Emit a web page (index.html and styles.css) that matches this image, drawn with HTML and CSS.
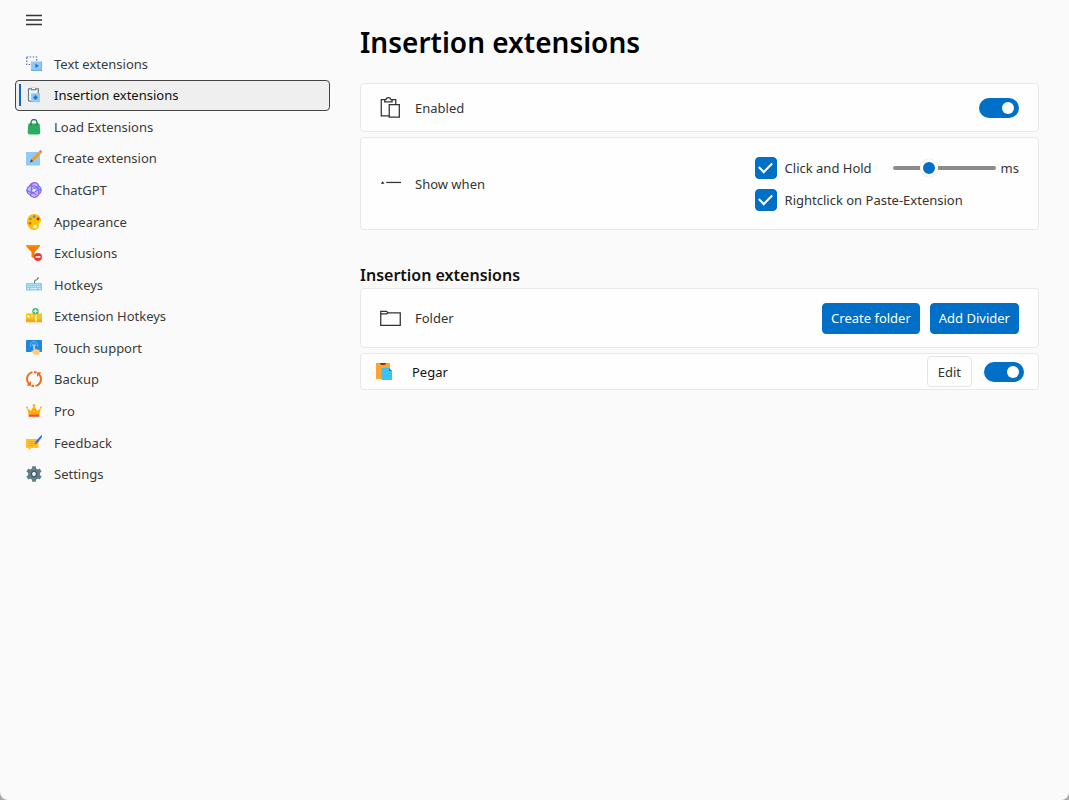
FILE: index.html
```html
<!DOCTYPE html>
<html lang="en">
<head>
<meta charset="utf-8">
<meta name="viewport" content="width=device-width, initial-scale=1">
<title>Insertion extensions</title>
<link rel="stylesheet" href="styles.css">
</head>
<body>
<div class="window">
  <aside class="sidebar">
    <button class="menu-button" type="button" aria-label="Toggle navigation">
      <svg class="menu-icon" viewBox="0 0 16 12" aria-hidden="true"><path d="M0 1.500h16M0 6h16M0 10.500h16" stroke="#333" stroke-width="1.300"/></svg>
    </button>
    <nav class="nav">
      <a class="nav-item" href="#text">
        <svg class="nav-icon" viewBox="0 0 16 16" aria-hidden="true"><path d="M.7 1h10v7.500h-10z" fill="none" stroke="#4a5fc4" stroke-width="1.200" stroke-dasharray="1.500 1.500"/><path d="M5 5.500h11v8.500H5z" fill="#8fc9fa"/><path d="M5 14.400h11V5" fill="none" stroke="#4b9bd8" stroke-width=".9"/><path d="M9.200 7.500l3.600 2.400-3.200 2z" fill="#1c6fd0"/></svg>
        <span>Text extensions</span></a>
      <a class="nav-item nav-item-current" href="#insertion" aria-current="page">
        <svg class="nav-icon" viewBox="0 0 16 16" aria-hidden="true"><path d="M2.500 1.800h9.800v12.400H3.500q-1 0-1-1z" fill="#f2f8fd" stroke="#607d8b" stroke-width="1.200"/><path d="M5 .8h5v2.600H5z" fill="#78909c"/><path d="M6 1.500h3" stroke="#fff"/><path d="M5 6.200h9v9H5z" fill="#90caf9"/><path d="M9.500 8.300v4.500M7.300 10.500h4.500" stroke="#1976d2" stroke-width="1.500"/><path d="M8 9l3 3M11 9l-3 3" stroke="#1976d2" stroke-width=".6"/></svg>
        <span>Insertion extensions</span></a>
      <a class="nav-item" href="#load">
        <svg class="nav-icon" viewBox="0 0 16 16" aria-hidden="true"><path d="M5 6V3.500a3 3 0 0 1 6 0V6" fill="none" stroke="#178544" stroke-width="1.300"/><path d="M3.200 4.500h9.600q.8 0 .9 1l.6 7.500q.1 2.500-2 2.500H3.700q-2.100 0-2-2.500l.6-7.500q.1-1 .9-1z" fill="#2cab62"/><path d="M5 4v2.500M11 4v2.500" stroke="#178544" stroke-width="1.200"/></svg>
        <span>Load Extensions</span></a>
      <a class="nav-item" href="#create">
        <svg class="nav-icon" viewBox="0 0 16 16" aria-hidden="true"><path d="M0 2h14v13.500H0z" fill="#90caf9"/><path d="M4.200 12.300l1-3.200L13 1.200l2.200 2.200-7.900 7.900z" fill="#f59a1b"/><path d="M13 1.200L14.300 0q1.700.3 1.700 2l-.8 1.400z" fill="#e57373"/><path d="M4 12.500l1.200-3.300 2 2z" fill="#37474f"/><path d="M12.300 2l2.100 2.100" stroke="#b0bec5"/></svg>
        <span>Create extension</span></a>
      <a class="nav-item" href="#chatgpt">
        <svg class="nav-icon" viewBox="0 0 16 16" aria-hidden="true"><defs><linearGradient id="knot" gradientUnits="userSpaceOnUse" x1="4" y1="0" x2="10" y2="16"><stop stop-color="#c44bed"/><stop offset=".45" stop-color="#5b78ee"/><stop offset="1" stop-color="#b052f7"/></linearGradient></defs><circle cx="8" cy="8" r="7" fill="#cdbcfb"/><path d="M8 5.300L5.300 3.800Q6 .7 8.800.7q2.900.2 4 3.300 2.600 1.500 2.400 4.500-.3 2.600-2.500 3.700-1.400 2.900-4.500 3.100-2.900 0-4.200-2.700Q.9 11.200.8 8.200 1 5.500 3.400 4.200 4.600 1.700 7 .9M5.300 3.800v6.100l5.200 3M12.800 4L8 6.700v5.600M15 8.500L10 5.600 5 8.400M12.700 12.200V6.300L7.500 3.300M4 12.600L8.300 10l4.800-2.800M.9 8.200l4.900 2.900 5-2.900" fill="none" stroke="url(#knot)" stroke-width="1.200"/><circle cx="8" cy="8.300" r="1.400" fill="#fff"/></svg>
        <span>ChatGPT</span></a>
      <a class="nav-item" href="#appearance">
        <svg class="nav-icon" viewBox="0 0 16 16" aria-hidden="true"><path d="M8 0C12 0 15 2.600 15 6.200c0 2.300-1.100 3.200-2.200 3.400.8 3.600-.8 6.400-4.300 6.400C4 16 1 12.500 1 8s3-8 7-8z" fill="#ffc107"/><circle cx="9" cy="12.500" r="1.800" fill="#fff"/><circle cx="4" cy="9.300" r="1.400" fill="#f4511e"/><circle cx="4.500" cy="5" r="1.400" fill="#7cb342"/><circle cx="8.200" cy="2.700" r="1.400" fill="#29a5e8"/><circle cx="12" cy="5" r="1.400" fill="#c2185b"/></svg>
        <span>Appearance</span></a>
      <a class="nav-item" href="#exclusions">
        <svg class="nav-icon" viewBox="0 0 16 16" aria-hidden="true"><path d="M.3 0h13.500v1.500L8.700 7v6.500L5.500 12V7L.3 1.500z" fill="#f57c00"/><path d="M.3 0h13.500v1.500H.3z" fill="#ff9800"/><circle cx="12" cy="12" r="4" fill="#e53935"/><path d="M9.500 12h5" stroke="#fff" stroke-width="1.500"/></svg>
        <span>Exclusions</span></a>
      <a class="nav-item" href="#hotkeys">
        <svg class="nav-icon" viewBox="0 0 16 16" aria-hidden="true"><path d="M8.500 6V4q0-1 1.500-1t1.500-.8V1h1.500" fill="none" stroke="#546e7a"/><path d="M0 6h16v7.500H0z" fill="#8cc8e8"/><path d="M1.200 7.700h13.600M1.200 9.700h13.600" stroke="#e4f4fc" stroke-dasharray="1.200 .8"/><path d="M1.200 11.700h2M4.500 11.700h7M12.700 11.700h2" stroke="#e4f4fc"/></svg>
        <span>Hotkeys</span></a>
      <a class="nav-item" href="#extension-hotkeys">
        <svg class="nav-icon" viewBox="0 0 16 16" aria-hidden="true"><path d="M0 5.500h16v8.700H0z" fill="#f7c21d"/><path d="M0 11.500h16v2.700H0z" fill="#f3a817"/><path d="M10 5.500v8.700" stroke="#fff4d0" stroke-width="1.300"/><path d="M2 7v2M2 9h2M5 8h2" stroke="#fff"/><circle cx="9.500" cy="3.200" r="3.200" fill="#45b568"/><path d="M9.500 1.200v4M7.500 3.200h4" stroke="#fff" stroke-width="1.200"/></svg>
        <span>Extension Hotkeys</span></a>
      <a class="nav-item" href="#touch">
        <svg class="nav-icon" viewBox="0 0 16 16" aria-hidden="true"><rect width="16" height="12" rx=".8" fill="#1e88e5"/><path d="M4.500 6.500a3.700 3.700 0 1 1 7 0M6 6a2 2 0 1 1 4 0" fill="none" stroke="#7ac2fa" stroke-width=".9"/><path d="M7.300 5q1-.8 1.600.2V9l4 .8q1 .5.800 1.700l-.7 3.300H8L5.200 11q.5-1 2.100 0z" fill="#ffcc80"/></svg>
        <span>Touch support</span></a>
      <a class="nav-item" href="#backup">
        <svg class="nav-icon" viewBox="0 0 16 16" aria-hidden="true"><g fill="none" stroke="#f26a1b" stroke-width="1.900"><path d="M6.500 1.100A7 7 0 0 0 3.200 13"/><path d="M9.500 14.900A7 7 0 0 0 12.800 3"/><path d="M8 1a7 7 0 0 1 2.500.5M8 15a7 7 0 0 1-2.500-.5"/></g><path d="M5 10v4.700H.5zM11 6V1.300h4.500z" fill="#f26a1b"/></svg>
        <span>Backup</span></a>
      <a class="nav-item" href="#pro">
        <svg class="nav-icon" viewBox="0 0 16 16" aria-hidden="true"><path d="M1 5l3.800 2.700L8 2.500l3.200 5.200L15 5l-1.800 7H2.800z" fill="#ffb300"/><circle cx="1" cy="4.500" r="1" fill="#ffb300"/><circle cx="15" cy="4.500" r="1" fill="#ffb300"/><circle cx="8" cy="2.200" r="1.300" fill="#ffb300"/><path d="M2.600 11.500h10.800v2.300H2.600z" fill="#f4512c"/><ellipse cx="8" cy="8.500" rx="1.100" ry="1.700" fill="#ffe9a8" stroke="#ef6c00" stroke-width=".7"/></svg>
        <span>Pro</span></a>
      <a class="nav-item" href="#feedback">
        <svg class="nav-icon" viewBox="0 0 16 16" aria-hidden="true"><path d="M0 4h12.500v9H5l-2.500 2.500V13H0z" fill="#ffc12e"/><path d="M2 6.500h7M2 8.500h5.500M2 10.500h5" stroke="#e9a02a" stroke-width=".8"/><path d="M7.800 8.300l2-1.500 1.300 1.300-1.500 2z" fill="#ec6b36"/><path d="M9.800 6.800L15.300.5l.7.900-4.900 6.700z" fill="#3671cf" stroke="#3671cf" stroke-width=".8"/></svg>
        <span>Feedback</span></a>
      <a class="nav-item" href="#settings">
        <svg class="nav-icon" viewBox="0 0 16 16" aria-hidden="true"><path d="M8 .2v15.600M1.300 4.100l13.400 7.800M1.300 11.900l13.400-7.800" stroke="#607d8b" stroke-width="3.800"/><circle cx="8" cy="8" r="6" fill="#607d8b"/><circle cx="8" cy="8" r="3.200" fill="#455a64"/><circle cx="8" cy="8" r="1.900" fill="#fafafa"/></svg>
        <span>Settings</span></a>
    </nav>
  </aside>

  <main class="content">
    <h1 class="page-title">Insertion extensions</h1>

    <section class="card card-enabled">
      <svg class="card-icon" viewBox="0 0 20 20" aria-hidden="true"><g fill="none" stroke="#333" stroke-width="1.200"><path d="M8.800 18H1.200V2.600H5.500Q6 .7 8 .7T10.500 2.600H15v4.500"/><path d="M4.500 2.600v2h7v-2"/><path d="M8.800 7.300h9.600v11.800H8.800z"/></g></svg>
      <label class="card-label" for="enabled">Enabled</label>
      <input class="switch" type="checkbox" role="switch" id="enabled" checked>
    </section>

    <section class="card card-show">
      <svg class="card-icon" viewBox="0 0 20 20" aria-hidden="true"><path d="M.8 10.200L2.500 7.800l1.700 2.400z" fill="#222"/><path d="M6 9h14" stroke="#333" stroke-width="1.200"/></svg>
      <span class="card-label">Show when</span>
      <div class="options">
        <div class="option">
          <input class="check" type="checkbox" id="hold" checked>
          <label class="option-label" for="hold">Click and Hold</label>
          <input class="slider" type="range" id="delay" min="0" max="100" value="32" aria-label="Hold time in milliseconds">
          <label for="delay">ms</label>
        </div>
        <div class="option">
          <input class="check" type="checkbox" id="rightclick" checked>
          <label for="rightclick">Rightclick on Paste-Extension</label>
        </div>
      </div>
    </section>

    <h2 class="section-title">Insertion extensions</h2>

    <section class="card card-folder">
      <svg class="card-icon" viewBox="0 0 20 20" aria-hidden="true"><path d="M.7 16.500V3.200h5.500L8 4.700h11.300v11.800zM.7 5.600h5.500L8 4.700" fill="none" stroke="#333" stroke-width="1.200"/></svg>
      <span class="card-label">Folder</span>
      <div class="actions">
        <button class="button button-primary" type="button">Create folder</button>
        <button class="button button-primary" type="button">Add Divider</button>
      </div>
    </section>

    <section class="card card-item">
      <svg class="item-icon" viewBox="0 0 18 18" aria-hidden="true"><path d="M1 0h14v16H1z" fill="#ffa332"/><path d="M5 0h6q0 2-3 2T5 0z" fill="#71363d"/><path d="M6.500 5H14l3 3v9H6.500z" fill="#37c3f5"/><path d="M14 5l3 3h-3z" fill="#1488bd"/></svg>
      <label class="item-label" for="pegar">Pegar</label>
      <button class="button button-edit" type="button">Edit</button>
      <input class="switch" type="checkbox" role="switch" id="pegar" checked>
    </section>
  </main>
</div>
</body>
</html>
```
FILE: styles.css
```css
* {
  box-sizing: border-box;
}

body {
  margin: 0;
  background: #a8a8a8;
  color: #333;
  font-family: "Noto Sans", "Open Sans", sans-serif;
  font-size: 13px;
  line-height: 18px;
}

.window {
  display: grid;
  grid-template-columns: minmax(200px, 315px) minmax(0, 1fr);
  gap: 30px;
  min-height: 100vh;
  padding: 0 30px 0 15px;
  border-radius: 0 0 8px 8px;
  background: #fafafa;
}

.menu-button {
  display: flex;
  align-items: center;
  width: 40px;
  height: 40px;
  margin-bottom: 8px;
  padding: 0 11px;
  border: 0;
  background: none;
}

.menu-icon {
  flex: none;
  width: 16px;
  height: 12px;
}

.nav {
  display: grid;
  grid-auto-rows: 1fr;
  min-height: 442px;
}

.nav-item {
  display: flex;
  align-items: center;
  gap: 12px;
  padding: 0 10px;
  border: 1px solid transparent;
  border-radius: 4px;
  color: #3a3a3a;
  text-decoration: none;
}

.nav-item-current {
  border-color: #444;
  background: #efefef linear-gradient(#1468b3, #1468b3) 3px center / 2px 22px no-repeat;
  color: #111;
}

.nav-icon {
  flex: none;
  width: 16px;
  height: 16px;
}

.content {
  padding-top: 20px;
}

.page-title {
  margin: 0 0 19px;
  color: #000;
  font-size: 28px;
  font-weight: 600;
  line-height: 44px;
}

.card {
  display: flex;
  align-items: center;
  margin-bottom: 5px;
  padding: 0 19px;
  border: 1px solid #e8e8e8;
  border-radius: 4px;
  background: #fefefe;
}

.card-enabled {
  min-height: 49px;
}

.card-show {
  min-height: 93px;
  margin-bottom: 33px;
}

.card-folder {
  min-height: 60px;
}

.card-item {
  min-height: 37px;
  padding: 0 14px;
}

.card-icon {
  flex: none;
  width: 21px;
  height: 21px;
  margin-right: 14px;
}

.card-label {
  margin-right: auto;
}

.item-icon {
  flex: none;
  width: 18px;
  height: 18px;
  margin-right: 19px;
}

.item-label {
  margin-right: auto;
  color: #111;
}

.section-title {
  margin: 0 0 1px;
  color: #111;
  font-size: 16px;
  font-weight: 600;
  line-height: 24px;
}

.switch {
  appearance: none;
  display: flex;
  align-items: center;
  justify-content: flex-start;
  flex: none;
  width: 40px;
  height: 20px;
  margin: 0;
  padding: 0 5px;
  border-radius: 10px;
  background: #8a8a8a;
}

.switch:checked {
  justify-content: flex-end;
  background: #006fc8;
}

.switch::before {
  content: "";
  width: 12px;
  height: 12px;
  border-radius: 50%;
  background: #fff;
}

.options {
  display: grid;
  gap: 10px;
}

.option {
  display: flex;
  align-items: center;
}

.check {
  appearance: none;
  display: grid;
  place-items: center;
  flex: none;
  width: 22px;
  height: 22px;
  margin: 0 8px 0 0;
  border: 1px solid #8a8a8a;
  border-radius: 4px;
}

.check:checked {
  border-color: #006fc8;
  background: #006fc8;
}

.check:checked::before {
  content: "";
  width: 11px;
  height: 6px;
  margin-bottom: 3px;
  border: solid #fff;
  border-width: 0 0 2px 2px;
  rotate: -45deg;
}

.option-label {
  margin-right: 21px;
}

.slider {
  appearance: none;
  width: 103px;
  height: 20px;
  margin: 0 5px 0 0;
  background: none;
}

.slider::-webkit-slider-runnable-track {
  height: 4px;
  border-radius: 2px;
  background: #8c8c8c;
}

.slider::-webkit-slider-thumb {
  appearance: none;
  width: 18px;
  height: 18px;
  margin-top: -7px;
  border: 3px solid #fff;
  border-radius: 50%;
  background: #006fc8;
  box-shadow: 0 0 1px #bbb;
}

.actions {
  display: flex;
  gap: 10px;
}

.button {
  height: 31px;
  padding: 0 8px;
  border: 1px solid #e5e5e5;
  border-radius: 4px;
  background: #fefefe;
  color: #333;
  font: inherit;
}

.button-primary {
  border-color: #006fc8;
  background: #006fc8;
  color: #fff;
}

.button-edit {
  margin-right: 12px;
  padding: 0 10px;
}
```
